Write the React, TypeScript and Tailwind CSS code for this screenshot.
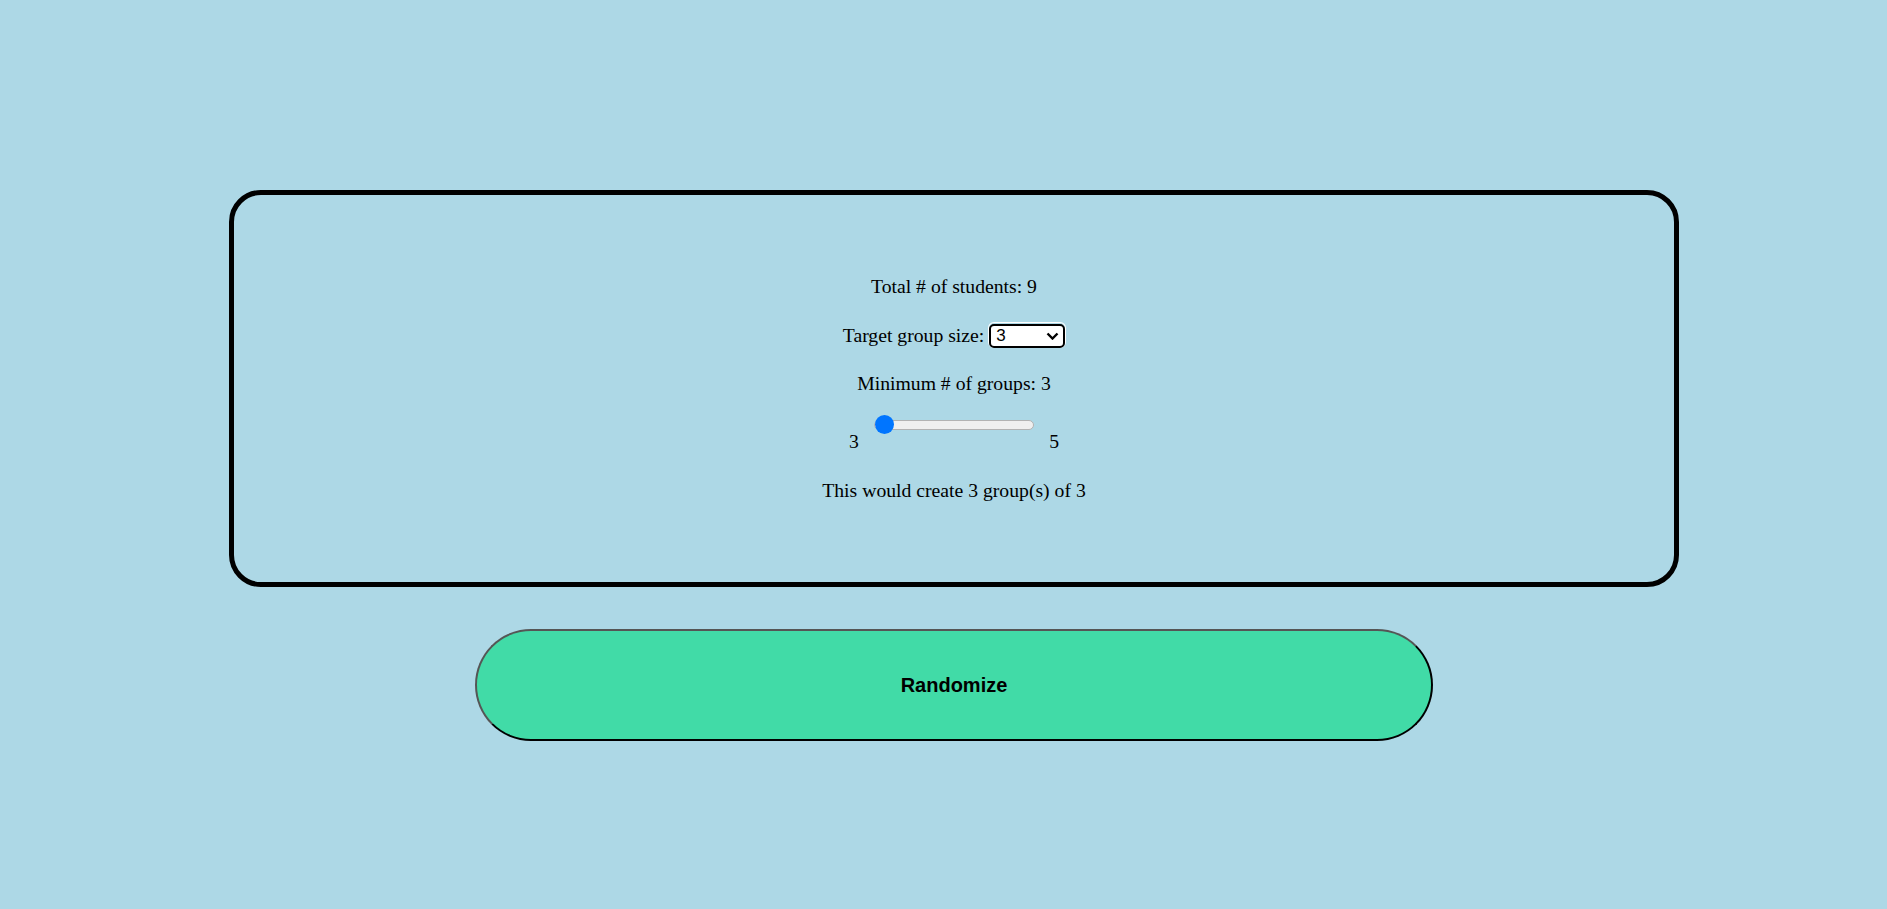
import { useState } from 'react'

export default function App() {
  const [size, setSize] = useState('3')
  const [minGroups, setMinGroups] = useState(3)

  return (
    <div className="min-h-screen w-full bg-[#add8e6] pl-[21px] pt-[190px] flex flex-col items-center font-['Liberation_Serif',serif] text-[19.7px] leading-[22px] text-black">
      <div className="w-[1450px] h-[397px] border-[5px] border-black rounded-[32px] pt-[80px] flex flex-col items-center">
        <p className="h-[22px]">Total # of students: 9</p>

        <div className="mt-[26px] h-[24px] flex items-start">
          <span className="mt-[1px]">Target group size:</span>
          <div className="relative ml-[5px] h-[24px] w-[76px] rounded-[5px] ring-1 ring-white">
            <select
              value={size}
              onChange={(e) => setSize(e.target.value)}
              className="appearance-none h-full w-full rounded-[5px] border-[2.5px] border-black bg-white pl-[5px] font-['Liberation_Sans',sans-serif] text-[17px] leading-[18px] text-black outline-none"
            >
              <option value="2">2</option>
              <option value="3">3</option>
              <option value="4">4</option>
              <option value="5">5</option>
            </select>
            <svg
              className="pointer-events-none absolute right-[6px] top-[9px]"
              width="13"
              height="8"
              viewBox="0 0 13 8"
              fill="none"
            >
              <path d="M1.5 1.5l5 5 5-5" stroke="black" strokeWidth="2.4" />
            </svg>
          </div>
        </div>

        <p className="mt-[25px] h-[22px]">Minimum # of groups: {minGroups}</p>

        <div className="mt-[21px] h-[19px] flex items-center">
          <input
            type="range"
            min={3}
            max={5}
            value={minGroups}
            onChange={(e) => setMinGroups(Number(e.target.value))}
            className="m-0 w-[160px] h-[19px] appearance-none bg-transparent cursor-pointer [&::-webkit-slider-runnable-track]:h-[10px] [&::-webkit-slider-runnable-track]:rounded-full [&::-webkit-slider-runnable-track]:border [&::-webkit-slider-runnable-track]:border-[#b2b2b2] [&::-webkit-slider-runnable-track]:bg-[#efefef] [&::-webkit-slider-thumb]:appearance-none [&::-webkit-slider-thumb]:mt-[-5.5px] [&::-webkit-slider-thumb]:h-[19px] [&::-webkit-slider-thumb]:w-[19px] [&::-webkit-slider-thumb]:rounded-full [&::-webkit-slider-thumb]:bg-[#0075ff]"
          />
        </div>
        <div className="-mt-[4px] w-[210px] h-[22px] flex justify-between">
          <span>3</span>
          <span>5</span>
        </div>

        <p className="mt-[27px] h-[22px]">This would create 3 group(s) of 3</p>
      </div>

      <button className="mt-[42px] w-[958px] h-[112px] rounded-full border-2 border-t-[#555] border-l-[#555] border-b-black border-r-black bg-[#41dba7] font-['Liberation_Sans',sans-serif] text-[20px] font-bold text-black">
        Randomize
      </button>
    </div>
  )
}
